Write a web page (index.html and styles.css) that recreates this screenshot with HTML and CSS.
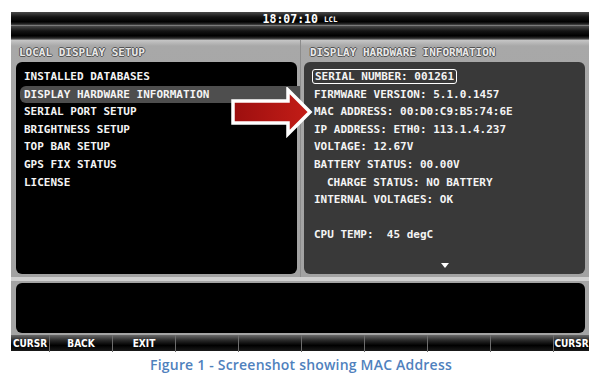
FILE: index.html
```html
<!DOCTYPE html>
<html>
<head>
    <meta charset="UTF-8">
    <title>Display Hardware Information</title>
    <link rel="stylesheet" href="styles.css">
</head>
<body>
    <div class="screen">
        <div class="topbar">
            <span class="clock">18:07:10</span>
            <span class="tz">LCL</span>
        </div>
        <div class="subbar"></div>
        <div class="frame">
            <div class="panes">
                <section class="pane pane-left">
                    <h2 class="pane-title">LOCAL DISPLAY SETUP</h2>
                    <ul class="pane-body menu">
                        <li>INSTALLED DATABASES</li>
                        <li class="selected">DISPLAY HARDWARE INFORMATION</li>
                        <li>SERIAL PORT SETUP</li>
                        <li>BRIGHTNESS SETUP</li>
                        <li>TOP BAR SETUP</li>
                        <li>GPS FIX STATUS</li>
                        <li>LICENSE</li>
                    </ul>
                </section>
                <section class="pane pane-right">
                    <h2 class="pane-title">DISPLAY HARDWARE INFORMATION</h2>
                    <div class="pane-body info">
                        <p><span class="boxed">SERIAL NUMBER: 001261</span></p>
                        <p>FIRMWARE VERSION: 5.1.0.1457</p>
                        <p>MAC ADDRESS: 00:D0:C9:B5:74:6E</p>
                        <p>IP ADDRESS: ETH0: 113.1.4.237</p>
                        <p>VOLTAGE: 12.67V</p>
                        <p>BATTERY STATUS: 00.00V</p>
                        <p class="indent">CHARGE STATUS: NO BATTERY</p>
                        <p>INTERNAL VOLTAGES: OK</p>
                        <p>&nbsp;</p>
                        <p>CPU TEMP:  45 degC</p>
                        <div class="more"></div>
                    </div>
                </section>
            </div>
            <div class="message"></div>
        </div>
        <div class="softkeys">
            <div class="key">CURSR</div>
            <div class="key">BACK</div>
            <div class="key">EXIT</div>
            <div class="key"></div>
            <div class="key"></div>
            <div class="key"></div>
            <div class="key"></div>
            <div class="key"></div>
            <div class="key"></div>
            <div class="key key-right">CURSR</div>
        </div>
        <!-- callout pointing at the MAC address line -->
        <svg class="callout" width="90" height="52" viewBox="0 0 90 52">
            <defs>
                <linearGradient id="red" x1="0" x2="1" y1="0" y2="0">
                    <stop offset="0" stop-color="#9c0f0f"/>
                    <stop offset="1" stop-color="#c41d17"/>
                </linearGradient>
            </defs>
            <polygon points="8,14 63,14 63,3 85,25 63,47 63,36 8,36" fill="url(#red)" stroke="#fff" stroke-width="3.5" stroke-linejoin="miter"/>
        </svg>
    </div>
    <p class="caption">Figure 1 - Screenshot showing MAC Address</p>
</body>
</html>
```

FILE: styles.css
```css
body {
    margin: 0;
    background: #fff;
    font-family: "DejaVu Sans Mono", monospace;
}
.screen {
    position: relative;
    width: 578px;
    margin: 12px 0 0 11px;
}
.topbar, .subbar {
    height: 14px;
    background: linear-gradient(to bottom, #4a4a4a 0%, #151515 35%, #000 70%, #2e2e2e 88%, #9a9a9a 100%);
}
.topbar {
    display: flex;
    justify-content: center;
    align-items: center;
    gap: 6px;
    color: #fff;
}
.clock {
    font-weight: bold;
    font-size: 11.5px;
}
.tz {
    font-weight: bold;
    font-size: 7.5px;
    margin-top: 1px;
}
.frame {
    background: #a4a4a4;
    display: flex;
    flex-direction: column;
}
.panes {
    display: grid;
    grid-template-columns: 289px 289px;
    border-bottom: 4px solid #d0d0d0;
}
.pane {
    display: flex;
    flex-direction: column;
    padding: 0 3px 3px 5px;
    background: linear-gradient(to bottom, #c6c6c6 0, #a8a8a8 6px, #a2a2a2 100%);
}
.pane-right {
    padding: 0 4px 3px 3px;
    border-left: 1px solid #8c8c8c;
}
.pane-title {
    margin: 0;
    height: 22px;
    line-height: 25px;
    padding-left: 3px;
    font-size: 11px;
    font-weight: bold;
    color: #e8e8e8;
    text-shadow: 1px 0 0 #555, -1px 0 0 #555, 0 1px 0 #555, 0 -1px 0 #555;
}
.pane-right .pane-title {
    padding-left: 6px;
}
.pane-body {
    height: 212px;
    margin: 0;
    padding: 6px 0 0 8px;
    border-radius: 6px;
    box-sizing: border-box;
    color: #f4f4f4;
    font-weight: bold;
    font-size: 11px;
    line-height: 17.6px;
}
.menu {
    list-style: none;
    background: #000;
}
.menu li {
    height: 17.6px;
}
.menu .selected {
    background: #4e4e4e;
    margin-left: -4px;
    margin-right: -3px;
    padding-left: 4px;
    border-radius: 6px 0 0 6px;
}
.info {
    position: relative;
    background: #393939;
    padding-left: 10px;
}
.info p {
    margin: 0;
    height: 17.6px;
    white-space: pre;
}
.indent {
    padding-left: 13px;
}
.boxed {
    margin-left: -2px;
    padding: 0 2px 0 2px;
    border: 1.5px solid #fff;
    border-radius: 3px;
}
.more {
    position: absolute;
    left: 137px;
    bottom: 6px;
    width: 0;
    height: 0;
    border-left: 4px solid transparent;
    border-right: 4px solid transparent;
    border-top: 5px solid #fff;
}
.message {
    height: 50px;
    margin: 2px 4px 2px 5px;
    background: #000;
    border-radius: 6px;
}
.softkeys {
    display: grid;
    grid-template-columns: 38px repeat(8, 63px) 1fr;
    height: 16px;
    background: linear-gradient(to bottom, #6a6a6a 0%, #262626 35%, #000 65%, #1a1a1a 100%);
}
.key {
    border-left: 1px solid #6c6c6c;
    color: #fff;
    font-family: "DejaVu Sans", sans-serif;
    font-stretch: condensed;
    font-weight: bold;
    font-size: 10px;
    line-height: 17px;
    text-align: center;
}
.key:first-child {
    border-left: none;
}
.callout {
    position: absolute;
    left: 214px;
    top: 75px;
}
.caption {
    margin: 4px 0 0;
    text-align: center;
    color: #4f81bd;
    font-family: "Open Sans", sans-serif;
    font-weight: 600;
    font-size: 14px;
    letter-spacing: 0.2px;
}
```
